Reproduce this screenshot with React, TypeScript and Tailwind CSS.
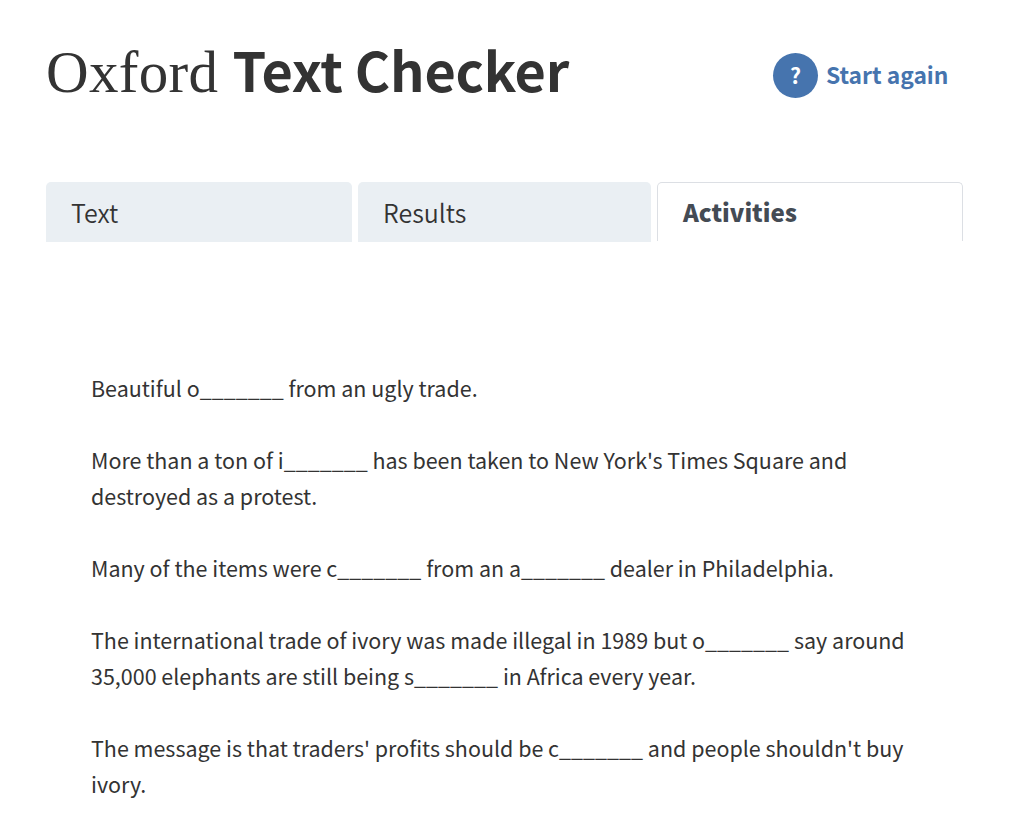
const tabs = [
  { label: "Text", className: "w-[306px] bg-[#eaeff3] pt-0.5 text-[25px] font-[350] text-[#333]" },
  { label: "Results", className: "w-[293px] bg-[#eaeff3] pt-0.5 text-[25px] font-[350] text-[#333]" },
  {
    label: "Activities",
    className:
      "h-[59px] w-[306px] border border-b-0 border-[#dcdfe4] text-[24px] font-black text-[#444b54]",
  },
];

const paragraphs = [
  ["Beautiful o_______ from an ugly trade."],
  [
    "More than a ton of i_______ has been taken to New York's Times Square and",
    "destroyed as a protest.",
  ],
  ["Many of the items were c_______ from an a_______ dealer in Philadelphia."],
  [
    "The international trade of ivory was made illegal in 1989 but o_______ say around",
    "35,000 elephants are still being s_______ in Africa every year.",
  ],
  [
    "The message is that traders' profits should be c_______ and people shouldn't buy",
    "ivory.",
  ],
];

export default function App() {
  return (
    <div className="h-[837px] w-[1027px] overflow-hidden bg-white font-['Noto_Sans_CJK_SC',sans-serif] text-[#333]">
      <header className="flex h-[182px] items-start justify-between pt-[33px] pr-[79px] pl-[46px]">
        <h1 className="flex h-[72px] items-baseline whitespace-nowrap leading-[72px]">
          <span className="w-[171px] font-['Liberation_Serif',serif] text-[59px] tracking-[0.3px]">
            Oxford
          </span>
          <span className="ml-[15.5px] text-[54px] font-bold tracking-[-0.22px]">
            Text Checker
          </span>
        </h1>
        <div className="mt-5 flex w-[175px] items-center gap-2 font-bold text-[#4674ae]">
          <button className="flex size-[45px] shrink-0 items-center justify-center rounded-full bg-[#4674ae] pb-px text-[21.5px] text-white">
            ?
          </button>
          <a className="text-[22.8px] whitespace-nowrap">Start again</a>
        </div>
      </header>

      <nav className="flex h-[60px] gap-1.5 pl-[46px]">
        {tabs.map((tab) => (
          <div
            key={tab.label}
            className={`flex items-center rounded-t-[5px] pl-[25px] ${tab.className}`}
          >
            {tab.label}
          </div>
        ))}
      </nav>

      <main className="space-y-9 pt-32 pl-[91px] text-[21.48px] leading-9">
        {paragraphs.map((lines) => (
          <p key={lines[0]}>
            {lines.map((line) => (
              <span key={line} className="block whitespace-nowrap">
                {line}
              </span>
            ))}
          </p>
        ))}
      </main>
    </div>
  );
}
